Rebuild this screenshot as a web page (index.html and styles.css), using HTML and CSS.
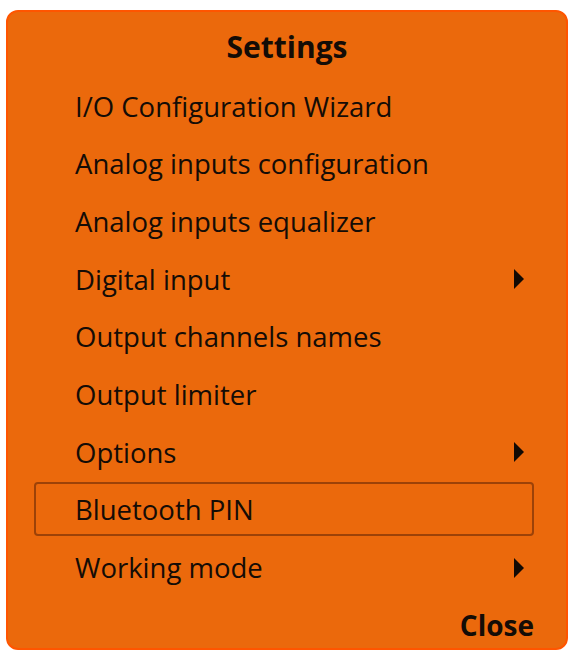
FILE: index.html
```html
<!DOCTYPE html>
<html lang="en">
<head>
    <meta charset="UTF-8">
    <title>Settings</title>
    <link rel="stylesheet" href="styles.css">
</head>
<body>
    <div class="panel">
        <h2 class="title">Settings</h2>
        <ul class="menu">
            <li class="item">I/O Configuration Wizard</li>
            <li class="item">Analog inputs configuration</li>
            <li class="item">Analog inputs equalizer</li>
            <li class="item sub">Digital input <span class="arrow"></span></li>
            <li class="item">Output channels names</li>
            <li class="item">Output limiter</li>
            <li class="item sub">Options <span class="arrow"></span></li>
            <li class="item selected">Bluetooth PIN</li>
            <li class="item sub">Working mode <span class="arrow"></span></li>
        </ul>
        <div class="footer">
            <button class="close">Close</button>
        </div>
    </div>
</body>
</html>
```
FILE: styles.css
```css
body {
    margin: 0;
    background: #fff;
    font-family: "Open Sans", "Noto Sans", sans-serif;
    color: #140c06;
}

.panel {
    margin: 10px 0 0 6px;
    width: 558px;
    height: 636px;
    box-sizing: content-box;
    background-color: #eb690c;
    border: 2px solid #ff5500;
    border-radius: 12px;
    display: flex;
    flex-direction: column;
}

.title {
    margin: 0;
    padding-top: 12px;
    height: 54px;
    line-height: 46px;
    text-align: center;
    font-size: 30px;
    font-weight: 700;
}

.menu {
    list-style: none;
    margin: 0;
    padding: 0 32px 0 26px;
    display: flex;
    flex-direction: column;
    gap: 3.7px;
}

.item {
    height: 54px;
    box-sizing: border-box;
    padding-left: 39px;
    padding-right: 8px;
    padding-top: 2px;
    border: 2px solid transparent;
    border-radius: 4px;
    font-size: 27.5px;
    display: flex;
    align-items: center;
    justify-content: space-between;
}

.item.selected {
    border-color: #9c4208;
}

.arrow {
    width: 0;
    height: 0;
    border-top: 10px solid transparent;
    border-bottom: 10px solid transparent;
    border-left: 10px solid #120a04;
}

.footer {
    flex: 1;
    display: flex;
    justify-content: flex-end;
    align-items: center;
    padding-top: 8px;
    padding-right: 32px;
}

.close {
    background: none;
    border: none;
    padding: 0;
    font-family: inherit;
    font-size: 28px;
    font-weight: 700;
    color: #140c06;
    cursor: pointer;
}
```
